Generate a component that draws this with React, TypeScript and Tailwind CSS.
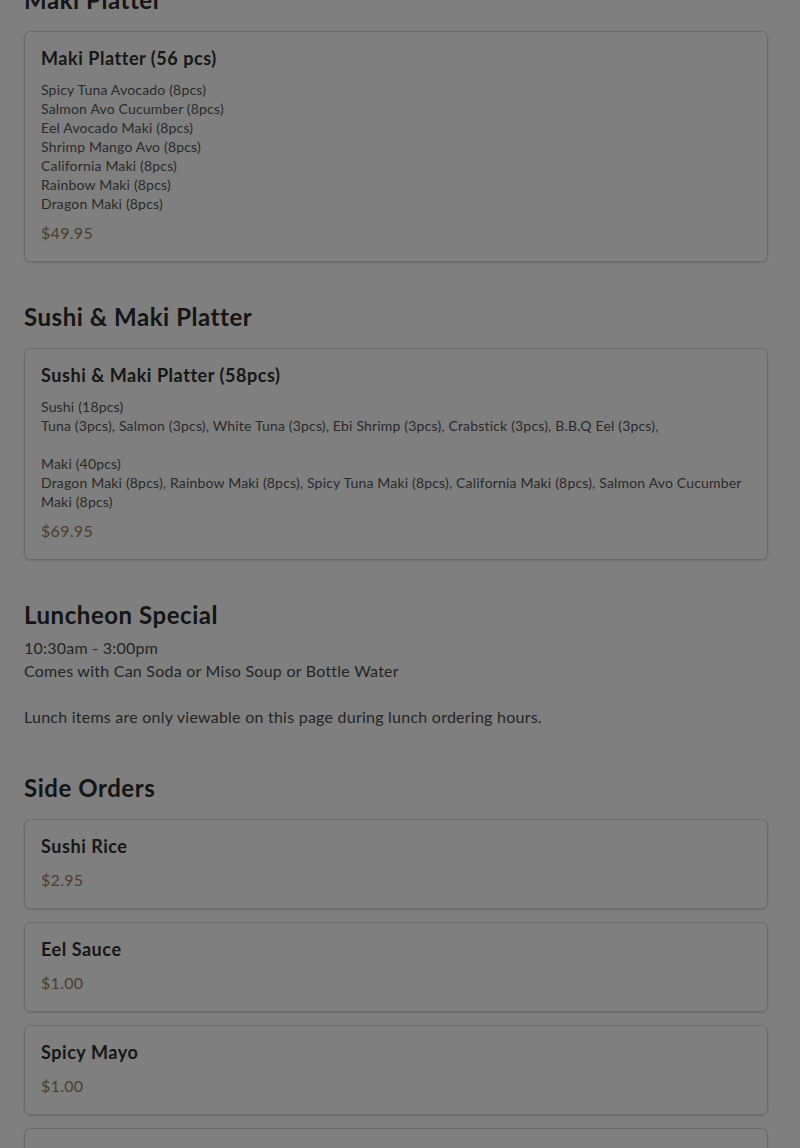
import React from 'react';

type Item = { name: string; lines?: string[]; price: string };

const font = { fontFamily: 'Lato, "Noto Sans", sans-serif' };

function ItemCard({ item }: { item: Item }) {
  return (
    <div className="rounded-md border border-[#d6d6d6] bg-white px-4 pt-[14px] pb-4 shadow-[0_1px_2px_rgba(0,0,0,0.15)]">
      <h3 className="text-[18px] leading-6 font-bold tracking-[0.55px] text-[#2e2e2e]">{item.name}</h3>
      {item.lines && (
        <div className="mt-2.5 mb-2 text-[14px] leading-[19px] tracking-[0.18px] text-[#555]">
          {item.lines.map((l, i) => (
            <div key={i} className="min-h-[19px]">
              {l}
            </div>
          ))}
        </div>
      )}
      <div className={`${item.lines ? '' : 'mt-2.5'} text-[16px] leading-6 tracking-[0.3px] text-[#9a7d52]`}>{item.price}</div>
    </div>
  );
}

function Section({ title, items, className }: { title: string; items: Item[]; className: string }) {
  return (
    <section className={className}>
      <h2 className="text-[24px] leading-8 font-bold tracking-[0.55px] text-[#2a2a2a] mb-[15px]">{title}</h2>
      <div className="flex flex-col gap-[13px]">
        {items.map((it) => (
          <ItemCard key={it.name} item={it} />
        ))}
      </div>
    </section>
  );
}

export default function App() {
  return (
    <div className="relative h-[1148px] overflow-hidden bg-white" style={font}>
      <div className="pl-6 pr-8">
        <Section
          className="mt-[-16px]"
          title="Maki Platter"
          items={[
            {
              name: 'Maki Platter (56 pcs)',
              lines: [
                'Spicy Tuna Avocado (8pcs)',
                'Salmon Avo Cucumber (8pcs)',
                'Eel Avocado Maki (8pcs)',
                'Shrimp Mango Avo (8pcs)',
                'California Maki (8pcs)',
                'Rainbow Maki (8pcs)',
                'Dragon Maki (8pcs)',
              ],
              price: '$49.95',
            },
          ]}
        />
        <Section
          className="mt-[39px]"
          title="Sushi & Maki Platter"
          items={[
            {
              name: 'Sushi & Maki Platter (58pcs)',
              lines: [
                'Sushi (18pcs)',
                'Tuna (3pcs), Salmon (3pcs), White Tuna (3pcs), Ebi Shrimp (3pcs), Crabstick (3pcs), B.B.Q Eel (3pcs),',
                '',
                'Maki (40pcs)',
                'Dragon Maki (8pcs), Rainbow Maki (8pcs), Spicy Tuna Maki (8pcs), California Maki (8pcs), Salmon Avo Cucumber Maki (8pcs)',
              ],
              price: '$69.95',
            },
          ]}
        />

        <section className="mt-[39px]">
          <h2 className="text-[24px] leading-8 font-bold tracking-[0.55px] text-[#2a2a2a] mb-[5px]">Luncheon Special</h2>
          <div className="text-[16px] leading-[23px] tracking-[0.24px] text-[#4a4a4a]">
            <div>10:30am - 3:00pm</div>
            <div>Comes with Can Soda or Miso Soup or Bottle Water</div>
            <div className="h-[23px]" />
            <div>Lunch items are only viewable on this page during lunch ordering hours.</div>
          </div>
        </section>

        <Section
          className="mt-[44px]"
          title="Side Orders"
          items={[
            { name: 'Sushi Rice', price: '$2.95' },
            { name: 'Eel Sauce', price: '$1.00' },
            { name: 'Spicy Mayo', price: '$1.00' },
            { name: 'Wasabi', price: '$0.50' },
          ]}
        />
      </div>

      {/* modal backdrop */}
      <div className="absolute inset-0 bg-black/50" />
    </div>
  );
}
